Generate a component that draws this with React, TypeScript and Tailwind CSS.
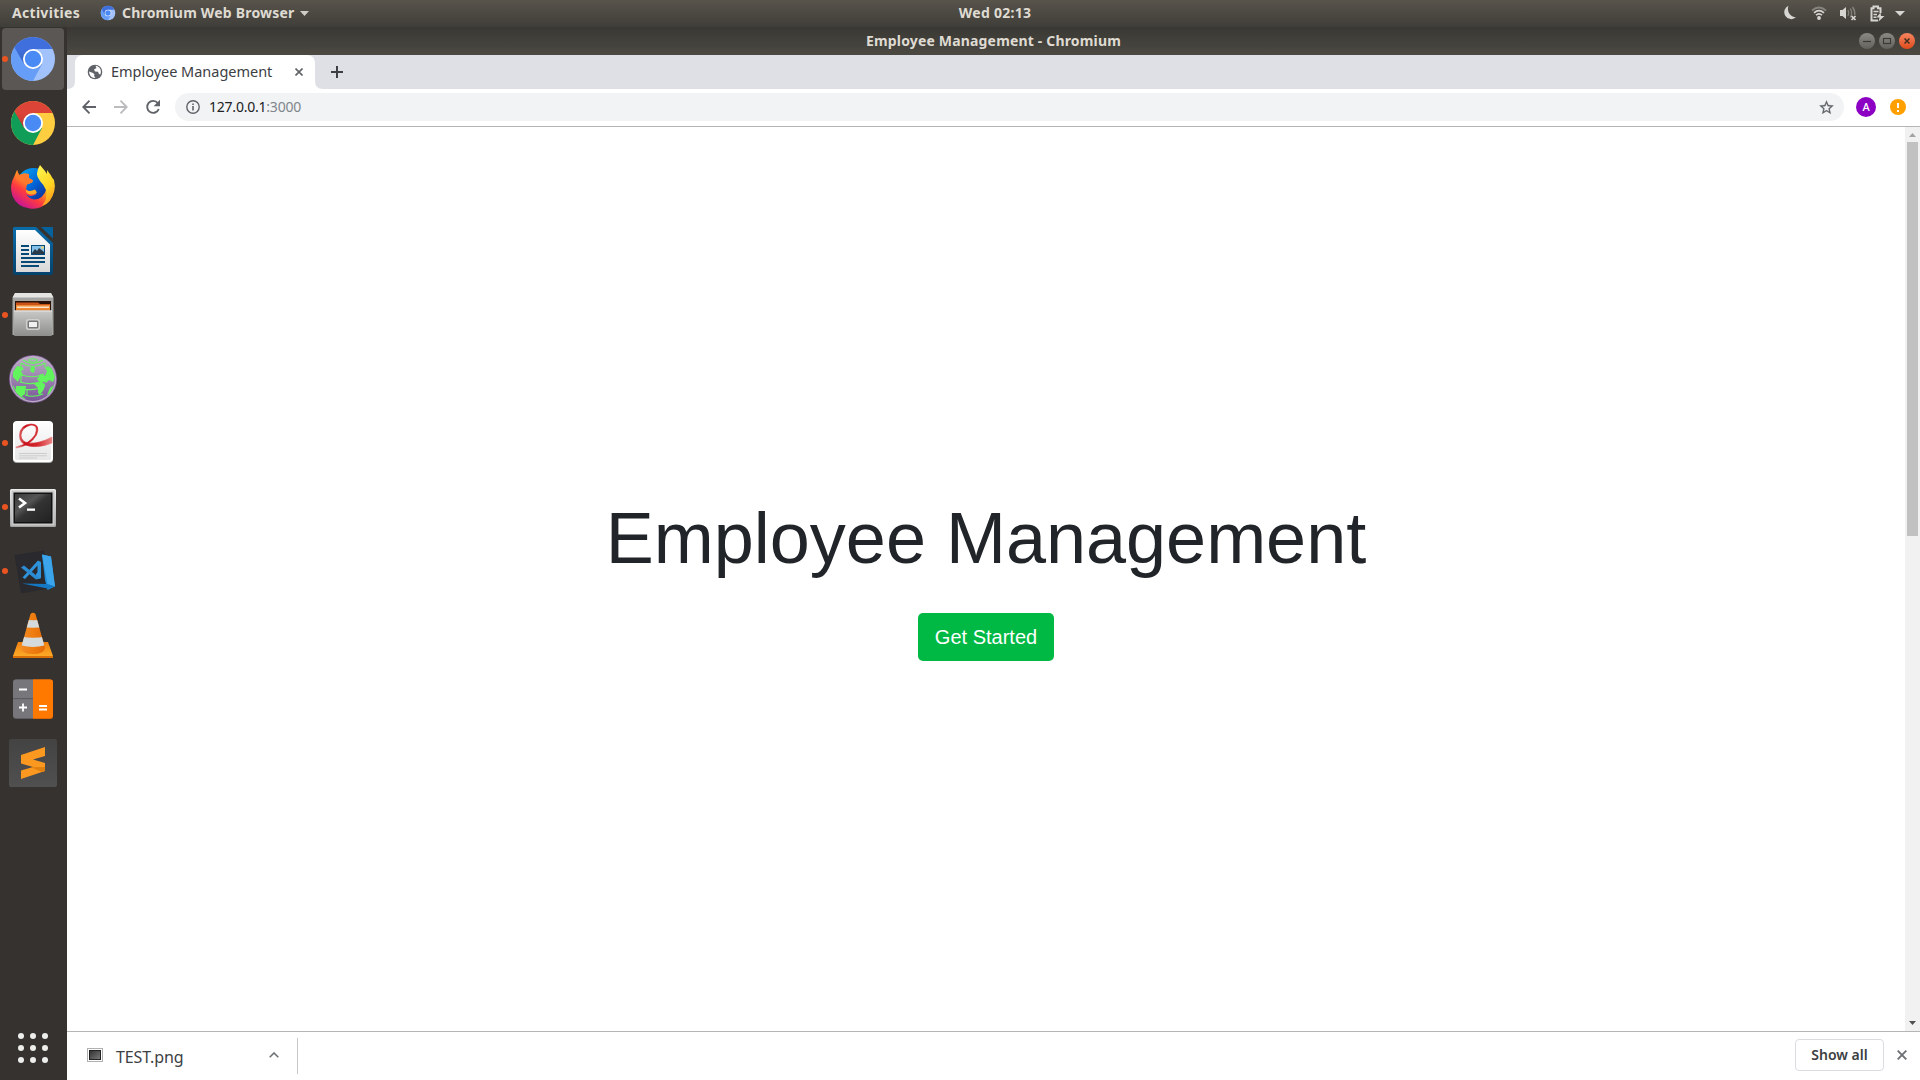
import React from "react";

function ChromeWheel({ id, top, left, right, className }: { id: string; top: string[]; left: string[]; right: string[]; className: string }) {
  return (
    <svg viewBox="0 0 48 48" className={className}>
      <defs>
        <linearGradient id={id + "t"} x1="0" y1="0" x2="0" y2="1">
          <stop offset="0.5" stopColor={top[0]} />
          <stop offset="1" stopColor={top[1]} />
        </linearGradient>
        <linearGradient id={id + "l"} x1="1" y1="0.1" x2="0.3" y2="0.8">
          <stop offset="0" stopColor={left[1]} />
          <stop offset="0.45" stopColor={left[0]} />
        </linearGradient>
        <linearGradient id={id + "r"} x1="0.3" y1="0" x2="0.6" y2="0.7">
          <stop offset="0" stopColor={right[1]} />
          <stop offset="0.4" stopColor={right[0]} />
        </linearGradient>
        <clipPath id={id + "c"}>
          <circle cx="24" cy="24" r="22" />
        </clipPath>
      </defs>
      <g clipPath={`url(#${id}c)`}>
        <rect width="48" height="48" fill={`url(#${id}r)`} />
        <path d="M5.5 11.5 L0 24 L0 48 H23 L33 29 L24 24Z" fill={`url(#${id}l)`} />
        <path d="M5.5 12.5 L0 0 H48 V14 H24 L15 29Z" fill={`url(#${id}t)`} />
      </g>
      <circle cx="24" cy="24" r="10" fill="#fff" />
      <circle cx="24" cy="24" r="8.2" fill="#4a8af4" />
    </svg>
  );
}

function Chromium({ id, className }: { id: string; className: string }) {
  return <ChromeWheel id={id} className={className} top={["#3f6fdc", "#3562c0"]} left={["#669df6", "#4272cf"]} right={["#a1c2fa", "#7fa6ea"]} />;
}

function Chrome() {
  return <ChromeWheel id="gc" className="size-12" top={["#db4437", "#b9392d"]} left={["#0f9d58", "#0b7f47"]} right={["#ffcd40", "#e8b32e"]} />;
}

function Firefox() {
  return (
    <svg viewBox="0 0 48 48" className="size-12">
      <defs>
        <linearGradient id="ffb" x1="0.8" y1="0.1" x2="0.15" y2="0.9">
          <stop offset="0.1" stopColor="#ffd52b" />
          <stop offset="0.4" stopColor="#ff9421" />
          <stop offset="0.65" stopColor="#ff3b3f" />
          <stop offset="1" stopColor="#c6139a" />
        </linearGradient>
        <linearGradient id="ffg" x1="0" y1="0" x2="1" y2="1">
          <stop offset="0" stopColor="#00b1f5" />
          <stop offset="0.5" stopColor="#0064d8" />
          <stop offset="1" stopColor="#1a1a78" />
        </linearGradient>
        <linearGradient id="fff" x1="0.2" y1="0" x2="0.6" y2="1">
          <stop offset="0" stopColor="#fff44f" />
          <stop offset="0.6" stopColor="#ffd422" />
          <stop offset="1" stopColor="#ff9a1f" />
        </linearGradient>
      </defs>
      <circle cx="24.5" cy="22" r="17" fill="url(#ffg)" />
      <path d="M8 7 L10 12 L15 10.500 L20 11 L20 15 L24 17.500 L23 19.500 L18 21.500 L17 26 Q20 30 25 28 L27.500 31 Q21 35 17 31 Q21 38 29 36 Q38 32 38 20 L41 12 L45 17 Q48 29 40 38 Q32 47 21 45.500 Q8 44 3.500 33 Q0 22 5 14Z" fill="url(#ffb)" />
      <path d="M17 27 Q21 29 26 26.500 L28 29.500 Q26 31.500 22 31.500 Q19 31.500 17 29Z" fill="#ffad28" />
      <path d="M31 2 L36 8 L38 11 V7 Q46 16 45 27 Q43 40 33 43 Q39 36 37 27 Q35 22 31 18 Q25 11 31 2Z" fill="url(#fff)" />
      <path d="M8 7 L10 12 L15 10.500 L20 11 L20 15 L24 17.500 L23 19.500 L18 21.500 Q14 18 8 17Z" fill="#ff7a2c" />
    </svg>
  );
}

function Writer() {
  return (
    <svg viewBox="0 0 48 48" className="size-12">
      <defs>
        <linearGradient id="wr" x1="0" y1="0" x2="0" y2="1">
          <stop offset="0" stopColor="#0a6cab" />
          <stop offset="1" stopColor="#04426b" />
        </linearGradient>
        <linearGradient id="wp" x1="0" y1="0" x2="0" y2="1">
          <stop offset="0" stopColor="#fff" />
          <stop offset="1" stopColor="#d8d8d8" />
        </linearGradient>
      </defs>
      <path d="M5.500 0 H27 L44 16 V46 Q44 48 42 48 H6 Q4 48 4 46 V1.500 Q4 0 5.500 0Z" fill="url(#wr)" />
      <path d="M32 0 H44 V11.500Z" fill="#06629c" />
      <path d="M7 3 H26 L41 17.500 V45 H7Z" fill="url(#wp)" />
      <g fill="#064a78">
        <path d="M12 18 h8 v2 h-8z M12 22 h8 v2 h-8z M12 26 h8 v2 h-8z M12 30 h24 v2 h-24z M12 34 h24 v2 h-24z M12 38 h18 v2 h-18z M22 18 h14 v10 h-14z" />
      </g>
      <path d="M23 19 h12 v8 h-12z" fill="#83c0ea" />
      <path d="M23 26 L26 22 L28 24 L30 21 L35 25 V27 H23Z" fill="#2b3a48" />
      <circle cx="33.500" cy="20.500" r="1.300" fill="#f5d76e" />
    </svg>
  );
}

function Files() {
  return (
    <svg viewBox="0 0 48 48" className="size-12">
      <defs>
        <linearGradient id="fl" x1="0" y1="0" x2="0" y2="1">
          <stop offset="0" stopColor="#c9c9c8" />
          <stop offset="1" stopColor="#8e8e8d" />
        </linearGradient>
      </defs>
      <path d="M6 2 H42 L44.500 7 V44 H3.500 V7Z" fill="#a5a5a3" />
      <path d="M6 2 H42 L44.500 6.500 H3.500Z" fill="#e4e4e3" />
      <rect x="6" y="10" width="36" height="12" fill="#2a1208" />
      <path d="M7 11.500 H29 L31 13 H41 V20 H7Z" fill="#c8541a" />
      <path d="M7 14 H41 V20 H7Z" fill="#f08a35" />
      <rect x="8" y="15.500" width="32" height="1.500" fill="#fbe4c8" />
      <rect x="7" y="18" width="34" height="2.500" fill="#e9822f" />
      <rect x="5" y="19.500" width="38" height="25.500" rx="1" fill="url(#fl)" />
      <rect x="5" y="19.500" width="38" height="1.200" fill="#dededd" />
      <rect x="17" y="28" width="14" height="11" rx="2.500" fill="#d0d0cf" />
      <rect x="18.500" y="29.500" width="11" height="8" rx="1.500" fill="#777" />
      <rect x="20" y="31" width="8" height="5" fill="#f0f0f0" />
    </svg>
  );
}

function TorGlobe() {
  return (
    <svg viewBox="0 0 48 48" className="size-12">
      <defs>
        <linearGradient id="tg" x1="0" y1="0" x2="0" y2="1">
          <stop offset="0" stopColor="#b9aec2" />
          <stop offset="1" stopColor="#7a5699" />
        </linearGradient>
        <clipPath id="tc">
          <circle cx="24" cy="24" r="22" />
        </clipPath>
      </defs>
      <circle cx="24" cy="24" r="24" fill="#7b5a92" />
      <circle cx="24" cy="24" r="23.200" fill="#b9a9c4" />
      <circle cx="24" cy="24" r="22" fill="url(#tg)" />
      <g clipPath="url(#tc)">
        <g fill="none" stroke="#62f45c" strokeWidth="1.100">
          <ellipse cx="24" cy="5.500" rx="4" ry="1.700" />
          <path d="M14 5 Q24 12 34 5 M12 8 Q24 15 36 8 M12 8 V13 M36 8 V13 M13 20 Q24 24 35 19 M11 27 Q24 31 38 25 M12 20 V28 M10 33 Q24 37 36 31 M16 40 Q24 43 34 39 M18 34 V41 M4 31 Q8 40 16 44" />
        </g>
        <path d="M4 17 L8 11 L13 12 L15 14 L12 16 L14 20 L11 22 L9 27 L4 22Z M21 14 L23 11 L26 13 L25 18 L22 17Z M28 24 L32 19 L36 21 L38 16 L36 13 L39 11 L43 14 L46 22 L44 27 L40 25 L37 28 L34 26 L31 28Z M7 31 L17 31 L16 39 L12 42 L7 37Z M25 29 L31 26 L36 29 L35 34 L31 40 L29 38 L29 33Z M41 33 L45 30 L41 39 L38 40Z" fill="#62f45c" />
      </g>
    </svg>
  );
}

function Evince() {
  return (
    <svg viewBox="0 0 48 48" className="size-12">
      <defs>
        <linearGradient id="ev" x1="0" y1="0" x2="0" y2="1">
          <stop offset="0" stopColor="#fdfdfd" />
          <stop offset="1" stopColor="#e6e6e6" />
        </linearGradient>
        <linearGradient id="er" x1="0" y1="0" x2="1" y2="0">
          <stop offset="0" stopColor="#e58a8a" />
          <stop offset="0.250" stopColor="#c8101a" />
          <stop offset="0.600" stopColor="#d42a30" />
          <stop offset="1" stopColor="#ec8585" />
        </linearGradient>
      </defs>
      <rect x="4" y="3" width="40" height="41" rx="4" fill="#a9a9a9" />
      <rect x="4" y="2" width="40" height="41" rx="4" fill="#fff" />
      <rect x="6" y="4" width="36" height="37" rx="2" fill="url(#ev)" />
      <path d="M7 28 Q20 25 26 16 Q30 6 22 6 Q13 8 12 16 Q12 23 20 24 Q30 25 43 18 V24 Q31 29 20 27 Q10 25 10.500 16 Q11 6 22 5 Q32 5 27.500 16 Q21 27 7 29Z" fill="url(#er)" stroke="url(#er)" strokeWidth="0.600" />
      <path d="M10 34.500 h28 M10 36.800 h28 M10 39 h18" stroke="#c9c9c9" strokeWidth="0.900" />
    </svg>
  );
}

function Terminal() {
  return (
    <svg viewBox="0 0 48 48" className="size-12">
      <defs>
        <linearGradient id="tb" x1="0" y1="0" x2="0" y2="1">
          <stop offset="0" stopColor="#ececec" />
          <stop offset="1" stopColor="#a3a3a3" />
        </linearGradient>
        <linearGradient id="ts" x1="0" y1="0" x2="1" y2="1">
          <stop offset="0" stopColor="#3a3a3a" />
          <stop offset="0.350" stopColor="#555" />
          <stop offset="0.500" stopColor="#333" />
          <stop offset="1" stopColor="#222" />
        </linearGradient>
      </defs>
      <g transform="translate(0 1)">
        <rect x="1" y="5" width="46" height="38" rx="1.500" fill="url(#tb)" />
        <rect x="2.500" y="6.500" width="43" height="35" fill="#c9c9c9" />
        <rect x="4.500" y="8.500" width="39" height="31" fill="#111" />
        <rect x="6" y="10" width="36" height="28" fill="url(#ts)" />
        <path d="M10 14.500 L16 19 L10 23.500" fill="none" stroke="#fff" strokeWidth="2.600" />
        <rect x="18" y="24.500" width="8" height="2.300" fill="#fff" />
      </g>
    </svg>
  );
}

function VsCode() {
  return (
    <svg viewBox="0 0 48 48" className="size-12">
      <path d="M5.500 8 L35 3.500 L43 41 L12 46.500Z" fill="#2a2a2e" />
      <path d="M33 7.500 L42 9.500 L46 39.500 L38.500 43 L36 33Z" fill="#1f8ad2" />
      <path d="M33 7.500 L42 9.500 L46 39.500 L38.500 37Z" fill="#3ba4ea" />
      <path d="M13 36.500 L38 37 L46 39.500 L38.500 41.500Z" fill="#1478c4" />
      <path d="M29 13.500 L32 15 V31 L30 32 L26.500 28 L28.500 25 V18.500 L16 32 L13.500 30.500Z" fill="#2f93db" />
      <path d="M12 20.500 L15 18.500 L31 31.500 L27 32.500Z" fill="#2b8bd3" />
    </svg>
  );
}

function Vlc() {
  return (
    <svg viewBox="0 0 48 48" className="size-12">
      <defs>
        <linearGradient id="vb" x1="0" y1="0" x2="0" y2="1">
          <stop offset="0" stopColor="#f08010" />
          <stop offset="1" stopColor="#ffb02c" />
        </linearGradient>
        <linearGradient id="vc" x1="0" y1="0" x2="1" y2="0">
          <stop offset="0" stopColor="#f59a3c" />
          <stop offset="0.500" stopColor="#ef7d10" />
          <stop offset="1" stopColor="#d75a05" />
        </linearGradient>
        <clipPath id="vk">
          <path d="M21.500 3 Q24 0.500 26.500 3 L36 37 Q35 43 24 43 Q13 43 12 37Z" />
        </clipPath>
      </defs>
      <path d="M9 31 H39 L44 45 V47 H4 V45Z" fill="url(#vb)" />
      <path d="M4 45 H44 V47 H4Z" fill="#d96f08" />
      <g clipPath="url(#vk)">
        <rect width="48" height="48" fill="url(#vc)" />
        <path d="M10 7.500 Q24 11 38 7.500 V15 Q24 18.500 10 15Z M8 24.500 Q24 29 40 24.500 V33 Q24 39 8 33Z" fill="#d5dadc" />
      </g>
    </svg>
  );
}

function Calculator() {
  return (
    <svg viewBox="0 0 48 48" className="size-12">
      <rect x="4" y="4.500" width="40" height="39.500" rx="3" fill="#5c5c61" />
      <path d="M24 4.500 H41 Q44 4.500 44 7.500 V41 Q44 44 41 44 H24Z" fill="#d96400" />
      <path d="M24 4.500 H41 Q44 4.500 44 7.500 V40 Q44 43 41 43 H24Z" fill="#ff7800" />
      <path d="M7 4.500 H24 V43 H7 Q4 43 4 40 V7.500 Q4 4.500 7 4.500Z" fill="#77767b" />
      <rect x="4" y="23" width="20" height="1.200" fill="#5c5c61" />
      <path d="M10 14.500 H18 M10 32.500 H18 M14 28.500 V36.500 M30 31 H38 M30 34.500 H38" stroke="#fff" strokeWidth="1.800" />
    </svg>
  );
}

function Sublime() {
  return (
    <svg viewBox="0 0 48 48" className="size-12">
      <defs>
        <linearGradient id="su" x1="0" y1="0" x2="0" y2="1">
          <stop offset="0" stopColor="#434343" />
          <stop offset="1" stopColor="#505050" />
        </linearGradient>
      </defs>
      <rect width="48" height="48" rx="2" fill="url(#su)" />
      <path d="M12 16 L36 8 V17 L24 20.500 L36 24 V32 L12 40 V31.500 L24 28 L12 24.500Z" fill="#fb9820" />
      <path d="M22 28.300 L33 33 L36 32 V28Z" fill="#e0800f" />
    </svg>
  );
}

const dock: { icon: React.ReactNode; running?: boolean; active?: boolean }[] = [
  { icon: <Chromium id="dc" className="size-12" />, running: true, active: true },
  { icon: <Chrome /> },
  { icon: <Firefox /> },
  { icon: <Writer /> },
  { icon: <Files />, running: true },
  { icon: <TorGlobe /> },
  { icon: <Evince />, running: true },
  { icon: <Terminal />, running: true },
  { icon: <VsCode />, running: true },
  { icon: <Vlc /> },
  { icon: <Calculator /> },
  { icon: <Sublime /> },
];

function Dock() {
  return (
    <nav className="flex w-[67px] shrink-0 flex-col bg-[#35322f]">
      {dock.map((d, i) => (
        <div key={i} className="flex h-16 items-center pl-0.5">
          <div className={"relative flex h-[62px] w-[62px] items-center justify-center rounded " + (d.active ? "bg-[#5a5755]" : "")}>
            {d.running && <span className="absolute top-7 left-0 size-1.5 rounded-full bg-[#e95420]" />}
            {d.icon}
          </div>
        </div>
      ))}
      <div className="mt-auto mb-[17px] ml-[18px] grid w-[30px] grid-cols-3 gap-1.5">
        {Array.from({ length: 9 }, (_, i) => (
          <span key={i} className="size-1.5 rounded-full bg-[#eeeeec]" />
        ))}
      </div>
    </nav>
  );
}

function StatusIcons() {
  return (
    <div className="flex items-center text-[#d8d6d2]">
      <svg viewBox="0 0 16 16" className="mr-[13px] size-4">
        <path d="M6.500 0.700 A7 7 0 1 0 14 12.300 A8.500 8.500 0 0 1 6.500 0.700Z" fill="currentColor" />
      </svg>
      <svg viewBox="0 0 16 16" className="mr-3 size-4" fill="none" stroke="currentColor">
        <path d="M1 5.500 Q8 -0.500 15 5.500" strokeWidth="1.700" opacity="0.4" />
        <path d="M3 7.800 Q8 3.500 13 7.800 M5 10.200 Q8 7.600 11 10.200" strokeWidth="1.600" />
        <circle cx="8" cy="13" r="1.900" fill="currentColor" stroke="none" />
      </svg>
      <svg viewBox="0 0 18 16" className="mr-3 h-4 w-[18px]" fill="none" stroke="currentColor">
        <path d="M1 5 H3.500 L7 2 V14 L3.500 11 H1Z" fill="currentColor" stroke="none" />
        <path d="M9 5 Q10.500 8 9 11 M11.300 3.500 Q14 8 11.300 12.500 M13.500 2 Q16.500 6 15.700 10" strokeWidth="1.300" opacity="0.4" />
        <path d="M12.500 11 L16.500 15 M16.500 11 L12.500 15" strokeWidth="1.700" />
      </svg>
      <svg viewBox="0 0 16 17" className="mr-[10px] h-[17px] w-4" fill="none" stroke="currentColor">
        <path d="M9 15.500 H2.500 V3.200 H4.500 V1.500 H9 V3.200 H11.500 V8" strokeWidth="2" />
        <path d="M4.500 6.500 H9.500 M4.500 9.500 H8 M4.500 12.300 H7.500" strokeWidth="1.500" />
        <path d="M11.500 7.500 L7.500 12.500 H10.500 L9.500 16.500 L15.500 11 H12Z" fill="currentColor" stroke="none" />
      </svg>
      <svg viewBox="0 0 10 5" className="mr-[15px] h-[5px] w-2.5">
        <path d="M0 0 H10 L5 5Z" fill="currentColor" />
      </svg>
    </div>
  );
}

function TopBar() {
  return (
    <header className="grid h-[27px] shrink-0 grid-cols-[1fr_auto_1fr] items-center bg-linear-to-b from-[#58544c] to-[#403e39] pb-px text-sm leading-none font-bold text-[#dfdbd2]">
      <div className="flex items-center pl-3">
        <span className="w-[88px] tracking-[0.3px]">Activities</span>
        <Chromium id="tp" className="size-4" />
        <span className="ml-1.5 tracking-[0.2px]">Chromium Web Browser</span>
        <svg viewBox="0 0 9 5" className="ml-[5px] h-[5px] w-[9px]">
          <path d="M0 0 H9 L4.500 5Z" fill="#d0cdc6" />
        </svg>
      </div>
      <span className="pl-[70px] tracking-[0.25px]">Wed 02:13</span>
      <div className="flex justify-end">
        <StatusIcons />
      </div>
    </header>
  );
}

function WindowTitle() {
  return (
    <div className="grid h-7 shrink-0 grid-cols-[1fr_auto_1fr] items-center bg-linear-to-b from-[#3a3834] to-[#4b4942] text-sm font-bold text-[#dfdbd2]">
      <span />
      <span className="tracking-[0.17px]">Employee Management - Chromium</span>
      <div className="flex justify-end gap-1 pr-[5px]">
        <span className="flex size-4 items-center justify-center rounded-full bg-linear-to-b from-[#8c8a85] to-[#63615c]">
          <svg viewBox="0 0 16 16" className="size-4"><path d="M4 8.500 H12" stroke="#3a3934" strokeWidth="1.200" /></svg>
        </span>
        <span className="flex size-4 items-center justify-center rounded-full bg-linear-to-b from-[#8c8a85] to-[#63615c]">
          <svg viewBox="0 0 16 16" className="size-4"><rect x="4.500" y="5.500" width="7" height="5" fill="none" stroke="#3a3934" strokeWidth="1.100" /></svg>
        </span>
        <span className="flex size-4 items-center justify-center rounded-full bg-linear-to-b from-[#f7845f] to-[#df4a16]">
          <svg viewBox="0 0 16 16" className="size-4"><path d="M5.500 5.500 L10.500 10.500 M10.500 5.500 L5.500 10.500" stroke="#41301f" strokeWidth="1.500" /></svg>
        </span>
      </div>
    </div>
  );
}

function TabStrip() {
  return (
    <div className="flex h-[34px] shrink-0 items-end bg-[#dee0e6]">
      <svg viewBox="0 0 8 8" className="size-2"><path d="M8 0 V8 H0 Q8 8 8 0Z" fill="#fff" /></svg>
      <div className="flex h-[34px] w-60 items-center rounded-t-lg bg-white pl-3">
        <svg viewBox="0 0 16 16" className="size-4">
          <circle cx="8" cy="8" r="7.300" fill="#5f6368" />
          <path d="M2 7.500 L6 9 L7.500 10.500 L7 12 L8.500 13.500 L7 14 Q2.500 13 2 7.500Z M8.500 1.700 L9.500 4 L7 5.500 L8 7.500 L11 7.800 L12 10 L13.300 10.500 Q15.500 4.500 10 2Z" fill="#fff" />
        </svg>
        <span className="ml-2 w-[180px] pb-px text-[14.5px] tracking-[-0.02px] text-[#3c4043]">Employee Management</span>
        <svg viewBox="0 0 8 8" className="ml-[4px] size-2"><path d="M0.500 0.500 L7.500 7.500 M7.500 0.500 L0.500 7.500" stroke="#5f6368" strokeWidth="1.600" /></svg>
      </div>
      <svg viewBox="0 0 8 8" className="size-2"><path d="M0 0 V8 H8 Q0 8 0 0Z" fill="#fff" /></svg>
      <svg viewBox="0 0 12 12" className="mb-[11px] ml-2 size-3"><path d="M6 0 V12 M0 6 H12" stroke="#3c4043" strokeWidth="2" /></svg>
    </div>
  );
}

function Toolbar() {
  return (
    <div className="flex h-[38px] shrink-0 items-center border-b border-[#b5b5b5] bg-white pb-px">
      <svg viewBox="0 0 14 14" className="ml-[15px] size-3.5" fill="none" stroke="#5f6368" strokeWidth="1.900"><path d="M14 7 H1.500 M7.500 0.700 L1.300 7 L7.500 13.300" /></svg>
      <svg viewBox="0 0 14 14" className="ml-[18px] size-3.5" fill="none" stroke="#babcbe" strokeWidth="1.900"><path d="M0 7 H12.500 M6.500 0.700 L12.700 7 L6.500 13.300" /></svg>
      <svg viewBox="0 0 16 16" className="ml-[17px] size-4"><path d="M13.800 10 A6 6 0 1 1 12.800 4" fill="none" stroke="#5f6368" strokeWidth="1.900" /><path d="M15 0.800 V7.200 H8.600Z" fill="#5f6368" /></svg>
      <div className="ml-[14px] flex h-7 flex-1 items-center rounded-full bg-[#f1f3f4] pr-[9px] pl-[11px]">
        <svg viewBox="0 0 14 14" className="size-3.5"><circle cx="7" cy="7" r="6.200" fill="none" stroke="#5f6368" strokeWidth="1.400" /><path d="M6.200 6 H7.800 V10.500 H6.200Z M6.200 3.500 H7.800 V5 H6.200Z" fill="#5f6368" /></svg>
        <span className="ml-[9px] flex-1 text-sm tracking-[-0.22px] text-[#202124]">127.0.0.1<span className="text-[#80868b]">:3000</span></span>
        <svg viewBox="0 0 24 24" className="size-[17px]"><path d="M22 9.240l-7.190-.620L12 2 9.190 8.630 2 9.240l5.460 4.730L5.820 21 12 17.270 18.180 21l-1.630-7.030L22 9.240zM12 15.400l-3.760 2.270 1-4.280-3.320-2.880 4.380-.380L12 6.100l1.710 4.040 4.380.380-3.320 2.880 1 4.280L12 15.400z" fill="#5f6368" stroke="#5f6368" strokeWidth="0.300" /></svg>
      </div>
      <span className="ml-3 flex size-5 items-center justify-center rounded-full bg-[#8b00c3] text-[11px] font-medium text-white">A</span>
      <span className="mr-[14px] ml-[14px] flex size-4 flex-col items-center justify-center gap-0.5 rounded-full bg-[#ff9f00]">
        <span className="h-[5px] w-0.5 bg-white" />
        <span className="size-0.5 bg-white" />
      </span>
    </div>
  );
}

function Page() {
  return (
    <main className="flex min-h-0 flex-1 bg-white">
      <div className="flex flex-1 flex-col items-center pt-[368px] font-['Liberation_Sans',Arial,sans-serif]">
        <h1 className="text-[72px] leading-[86px] text-[#212529]">Employee Management</h1>
        <button className="mt-8 h-12 w-[136px] rounded-[5px] bg-[#00b944] text-xl text-white">Get Started</button>
      </div>
      <div className="flex w-[15px] flex-col items-center bg-[#f1f1f1]">
        <svg viewBox="0 0 7 4" className="mt-1.5 h-1 w-[7px]"><path d="M0 4 H7 L3.500 0Z" fill="#a3a3a3" /></svg>
        <div className="mt-[5px] h-[394px] w-[11px] bg-[#c1c1c1]" />
        <svg viewBox="0 0 7 4" className="mt-auto mb-1.5 h-1 w-[7px]"><path d="M0 0 H7 L3.500 4Z" fill="#505050" /></svg>
      </div>
    </main>
  );
}

function DownloadBar() {
  return (
    <footer className="flex h-[49px] shrink-0 items-center border-t border-[#b5b5b5] bg-white">
      <svg viewBox="0 0 16 14" className="mb-[3px] ml-5 h-3.5 w-4">
        <defs>
          <linearGradient id="im" x1="0" y1="0" x2="1" y2="1">
            <stop offset="0" stopColor="#333" />
            <stop offset="1" stopColor="#777" />
          </linearGradient>
        </defs>
        <rect width="16" height="14" fill="#b0b0b0" />
        <rect x="1" y="1" width="14" height="12" fill="#fff" />
        <rect x="2" y="2" width="12" height="10" fill="#222" />
        <rect x="3" y="3" width="10" height="8" fill="url(#im)" />
      </svg>
      <span className="ml-[13px] w-[153px] pt-0.5 text-base tracking-[-0.1px] text-[#3c4043]">TEST.png</span>
      <svg viewBox="0 0 10 6" className="mb-[3px] h-1.5 w-2.5"><path d="M0.700 5.300 L5 1 L9.300 5.300" fill="none" stroke="#6e7276" strokeWidth="1.600" /></svg>
      <div className="ml-[18px] h-9 w-px bg-[#c8c8c8]" />
      <button className="mb-0.5 ml-auto h-8 w-[89px] rounded border border-[#dadce0] text-sm font-semibold text-[#3c4043]">Show all</button>
      <svg viewBox="0 0 10 10" className="mr-[13px] mb-0.5 ml-[13px] size-2.5"><path d="M0.700 0.700 L9.300 9.300 M9.300 0.700 L0.700 9.300" stroke="#6e7276" strokeWidth="1.900" /></svg>
    </footer>
  );
}

export default function App() {
  return (
    <div className="flex h-[1080px] w-[1920px] flex-col overflow-hidden font-['Noto_Sans',sans-serif]">
      <TopBar />
      <div className="flex min-h-0 flex-1">
        <Dock />
        <div className="flex min-w-0 flex-1 flex-col">
          <WindowTitle />
          <TabStrip />
          <Toolbar />
          <Page />
          <DownloadBar />
        </div>
      </div>
    </div>
  );
}
